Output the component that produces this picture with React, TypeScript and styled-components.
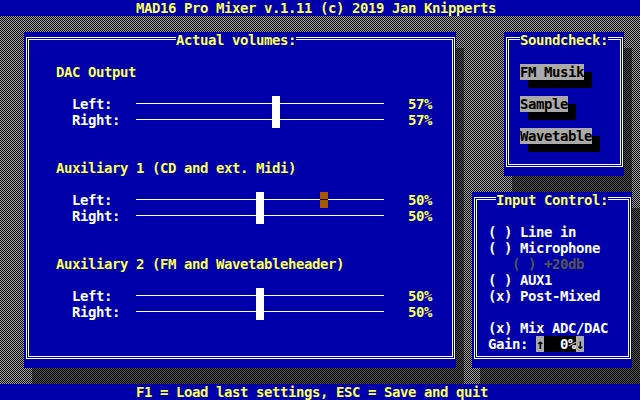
import React from 'react';
import styled, { createGlobalStyle } from 'styled-components';

const BLUE = '#0000AA';
const YELLOW = '#FFFF55';
const WHITE = '#FFFFFF';
const GRAY = '#AAAAAA';
const DGRAY = '#555555';
const BLACK = '#000000';
const BROWN = '#AA5500';
const FONT = '"DejaVu Sans Mono", "Liberation Mono", monospace';

const Global = createGlobalStyle`
  html, body { margin: 0; padding: 0; background: ${BLACK}; }
  body {
    font-family: ${FONT};
    font-size: 14px;
    font-weight: bold;
    line-height: 16px;
    letter-spacing: -0.43px;
    white-space: pre;
  }
`;

const Screen = styled.div`
  width: 640px;
  height: 400px;
  display: flex;
  flex-direction: column;
  overflow: hidden;
`;

const StatusBar = styled.header`
  height: 16px;
  flex: none;
  background: ${BLUE};
  color: ${YELLOW};
  padding-left: 136px;
`;

const Desktop = styled.main`
  flex: 1;
  position: relative;
  z-index: 0;
  display: flex;
  align-items: flex-start;
  padding: 16px 0 0 24px;
  background: repeating-conic-gradient(${GRAY} 0% 25%, ${BLACK} 0% 50%) 0 0 / 2px 2px;
`;

const Win = styled.section<{ $w: number; $h: number }>`
  position: relative;
  flex: none;
  box-sizing: border-box;
  width: ${(p) => p.$w}px;
  height: ${(p) => p.$h}px;
  background: ${BLUE};
  padding: 5px 1px 9px 2px;
  display: flex;
  &::before {
    content: '';
    position: absolute;
    left: 8px;
    top: 16px;
    width: 100%;
    height: 100%;
    z-index: -1;
    background: repeating-conic-gradient(${DGRAY} 0% 25%, ${BLACK} 0% 50%) 0 0 / 2px 2px;
  }
`;

const Frame = styled.div<{ $pad: string }>`
  flex: 1;
  border: 3px double ${WHITE};
  padding: ${(p) => p.$pad};
  display: flex;
  flex-direction: column;
  align-items: flex-start;
`;

const TitleBar = styled.div<{ $shift?: number }>`
  position: absolute;
  top: 0;
  left: 0;
  right: 0;
  display: flex;
  justify-content: center;
  padding-right: ${(p) => (p.$shift ?? 0) * 2}px;
`;

const Title = styled.h2`
  margin: 0;
  font: inherit;
  height: 16px;
  background: ${BLUE};
  color: ${YELLOW};
`;

const RightCol = styled.div`
  display: flex;
  flex-direction: column;
  align-items: flex-start;
  gap: 16px;
  margin-left: 16px;
`;

const Offset = styled.div<{ $x: number }>`
  margin-left: ${(p) => p.$x}px;
`;

const Sections = styled.div`
  display: flex;
  flex-direction: column;
  gap: 32px;
`;

const Section = styled.div`
  display: flex;
  flex-direction: column;
`;

const SectionTitle = styled.h3`
  margin: 0 0 16px;
  font: inherit;
  height: 16px;
  color: ${YELLOW};
`;

const SliderGrid = styled.div`
  margin-left: 16px;
  display: grid;
  grid-template-columns: 64px 248px 24px 24px;
  grid-template-rows: 16px 16px;
`;

const Label = styled.span<{ $row: number }>`
  grid-column: 1;
  grid-row: ${(p) => p.$row};
  color: ${WHITE};
`;

const Value = styled.span<{ $row: number }>`
  grid-column: 4;
  grid-row: ${(p) => p.$row};
  color: ${YELLOW};
`;

const Track = styled.div`
  grid-column: 2;
  grid-row: 1 / 3;
  position: relative;
  display: flex;
  flex-direction: column;
`;

const TrackLine = styled.div`
  height: 16px;
  background: linear-gradient(${WHITE}, ${WHITE}) 0 7px / 100% 1px no-repeat;
`;

const Thumb = styled.div`
  position: absolute;
  top: 0;
  width: 8px;
  height: 32px;
  background: ${WHITE};
`;

const Marker = styled.div`
  position: absolute;
  top: 0;
  width: 8px;
  height: 16px;
  background: linear-gradient(${BLACK}, ${BLACK}) 0 7px / 100% 1px no-repeat, ${BROWN};
`;

const Buttons = styled.div`
  display: flex;
  flex-direction: column;
  align-items: flex-start;
  gap: 16px;
`;

const Button = styled.button`
  all: unset;
  height: 16px;
  background: ${GRAY};
  color: ${BLACK};
  box-shadow: 8px 8px 0 ${BLACK};
`;

const Options = styled.div`
  display: flex;
  flex-direction: column;
`;

const Option = styled.div<{ $disabled?: boolean; $gapBefore?: boolean }>`
  height: 16px;
  color: ${(p) => (p.$disabled ? DGRAY : WHITE)};
  padding-left: ${(p) => (p.$disabled ? 24 : 0)}px;
  margin-top: ${(p) => (p.$gapBefore ? 16 : 0)}px;
`;

const GainRow = styled.div`
  height: 16px;
  display: flex;
  color: ${WHITE};
`;

const SpinArrow = styled.span`
  background: ${GRAY};
  color: ${BLACK};
  width: 8px;
`;

const SpinField = styled.span`
  background: ${BLACK};
  color: ${WHITE};
  width: 32px;
`;

const CELLS = 31;
const CELL = 8;

type Channel = { label: string; value: number };

const Slider: React.FC<{ left: number; right: number; marker?: number }> = ({ left, right, marker }) => {
  const pos = (v: number) => Math.floor((v * CELLS) / 100) * CELL;
  return (
    <SliderGrid>
      <Label $row={1}>Left:</Label>
      <Label $row={2}>Right:</Label>
      <Track>
        <TrackLine />
        <TrackLine />
        <Thumb style={{ left: pos(left) }} />
        {marker !== undefined && <Marker style={{ left: marker * CELL }} />}
      </Track>
      <Value $row={1}>{left}%</Value>
      <Value $row={2}>{right}%</Value>
    </SliderGrid>
  );
};

const sections = [
  { title: 'DAC Output', left: 57, right: 57 },
  { title: 'Auxiliary 1 (CD and ext. Midi)', left: 50, right: 50, marker: 23 },
  { title: 'Auxiliary 2 (FM and Wavetableheader)', left: 50, right: 50 },
];

export default function App() {
  return (
    <Screen>
      <Global />
      <StatusBar>MAD16 Pro Mixer v.1.11 (c) 2019 Jan Knipperts</StatusBar>
      <Desktop>
        <Win $w={432} $h={336}>
          <TitleBar $shift={4}>
            <Title>Actual volumes:</Title>
          </TitleBar>
          <Frame $pad="24px 0 0 27px">
            <Sections>
              {sections.map((s) => (
                <Section key={s.title}>
                  <SectionTitle>{s.title}</SectionTitle>
                  <Slider left={s.left} right={s.right} marker={s.marker} />
                </Section>
              ))}
            </Sections>
          </Frame>
        </Win>
        <RightCol>
          <Offset $x={32}>
            <Win $w={120} $h={144}>
              <TitleBar>
                <Title>Soundcheck:</Title>
              </TitleBar>
              <Frame $pad="24px 0 0 11px">
                <Buttons>
                  <Button>FM Musik</Button>
                  <Button>Sample</Button>
                  <Button>Wavetable</Button>
                </Buttons>
              </Frame>
            </Win>
          </Offset>
          <Win $w={160} $h={176}>
            <TitleBar>
              <Title>Input Control:</Title>
            </TitleBar>
            <Frame $pad="24px 0 0 11px">
              <Options>
                <Option>( ) Line in</Option>
                <Option>( ) Microphone</Option>
                <Option $disabled>( ) +20db</Option>
                <Option>( ) AUX1</Option>
                <Option>(x) Post-Mixed</Option>
                <Option $gapBefore>(x) Mix ADC/DAC</Option>
                <GainRow>
                  <span>Gain: </span>
                  <SpinArrow>↑</SpinArrow>
                  <SpinField>  0%</SpinField>
                  <SpinArrow>↓</SpinArrow>
                </GainRow>
              </Options>
            </Frame>
          </Win>
        </RightCol>
      </Desktop>
      <StatusBar>F1 = Load last settings, ESC = Save and quit</StatusBar>
    </Screen>
  );
}
